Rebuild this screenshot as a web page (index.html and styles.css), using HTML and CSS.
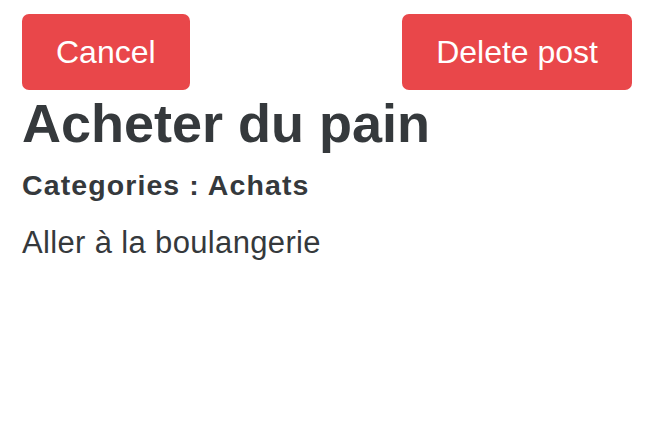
FILE: index.html
```html
<!DOCTYPE html>
<html lang="fr">
<head>
<meta charset="utf-8">
<title>Acheter du pain</title>
<link rel="stylesheet" href="styles.css">
</head>
<body>
<div class="page">
  <div class="actions">
    <button class="btn">Cancel</button>
    <button class="btn">Delete post</button>
  </div>
  <h1 class="title">Acheter du pain</h1>
  <h4 class="category">Categories : Achats</h4>
  <p class="body">Aller à la boulangerie</p>
</div>
</body>
</html>
```
FILE: styles.css
```css
html, body {
  margin: 0;
  padding: 0;
  background: #fff;
}
.page {
  padding: 14px 22px;
  font-family: "Liberation Sans", Arial, sans-serif;
  color: #35393c;
}
.actions {
  display: flex;
  justify-content: space-between;
  align-items: flex-start;
}
.btn {
  font-family: "Liberation Sans", Arial, sans-serif;
  font-size: 32px;
  line-height: 76px;
  height: 76px;
  padding: 0 34px;
  border: none;
  border-radius: 7px;
  background: #e9474a;
  color: #fff;
}
.title {
  margin: 0;
  font-size: 54px;
  font-weight: bold;
  line-height: 66px;
}
.category {
  margin: 12px 0 0;
  font-size: 28.5px;
  font-weight: bold;
  letter-spacing: 1.1px;
  line-height: 34px;
}
.body {
  margin: 23px 0 0;
  font-size: 31px;
  letter-spacing: 0.35px;
  line-height: 36px;
}
```
